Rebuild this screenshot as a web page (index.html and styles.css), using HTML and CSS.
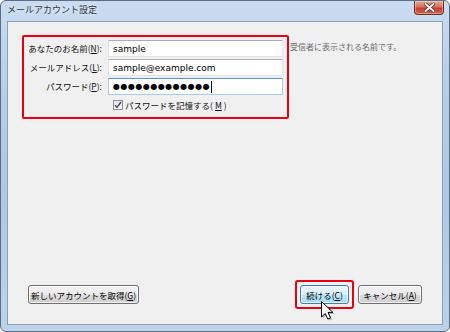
FILE: index.html
```html
<!DOCTYPE html>
<html>
<head>
<meta charset="utf-8">
<link rel="stylesheet" href="styles.css">
</head>
<body>

<!-- dialog window -->
<div class="window">
  <div class="titlebar">
    <span class="title">メールアカウント設定</span>
    <button class="close" aria-label="閉じる">
      <svg width="11" height="9" viewBox="0 0 11 9"><path d="M1.5 1 L9.5 8 M9.5 1 L1.5 8" stroke="#5b1c14" stroke-width="3.4" stroke-linecap="round"/><path d="M1.5 1 L9.5 8 M9.5 1 L1.5 8" stroke="#fff" stroke-width="2" stroke-linecap="round"/></svg>
    </button>
  </div>

  <div class="client">
    <div class="account">
      <div class="mark form">
        <label class="label">あなたのお名前(<u>N</u>):</label>
        <div class="field">sample</div>

        <label class="label">メールアドレス(<u>L</u>):</label>
        <div class="field">sample@example.com</div>

        <label class="label">パスワード(<u>P</u>):</label>
        <div class="field focus"><span class="dots">●●●●●●●●●●●●●</span><span class="caret"></span></div>

        <span></span>
        <label class="remember">
          <span class="check">
            <svg width="8" height="8" viewBox="0 0 8 8"><path d="M1 4.2 L3 6.5 L7 1" fill="none" stroke="#36486b" stroke-width="1.4"/></svg>
          </span>
          パスワードを記憶する(<u>M</u>)
        </label>
      </div>
      <p class="hint">受信者に表示される名前です。</p>
    </div>

    <div class="actions">
      <button class="btn btn-new">新しいアカウントを取得(<u>G</u>)</button>
      <span class="spacer"></span>
      <span class="mark mark-btn">
        <button class="btn btn-go hover">続ける(<u>C</u>)</button>
        <svg class="cursor" width="14" height="21" viewBox="0 0 14 21">
          <path d="M2 2 L2 17.5 L5.8 14 L8.3 19.6 L11 18.4 L8.5 12.9 L13.4 12.9 Z" fill="rgba(0,0,0,0.25)"/>
          <path d="M0.5 0.5 L0.5 16 L4.3 12.5 L6.8 18.1 L9.5 16.9 L7 11.4 L11.9 11.4 Z" fill="#fff" stroke="#000" stroke-width="1" stroke-linejoin="round"/>
        </svg>
      </span>
      <button class="btn btn-cancel">キャンセル(<u>A</u>)</button>
    </div>
  </div>
</div>

</body>
</html>
```

FILE: styles.css
```css
* {box-sizing: border-box}
body {
  margin: 0;
  background: #fff;
  font-family: "Noto Sans CJK JP", "DejaVu Sans", sans-serif;
  font-size: 8.5px;
  color: #111;
}

/* window frame */
.window {
  width: 450px;
  height: 332px;
  display: flex;
  flex-direction: column;
  padding: 0 6px 6px 6px;
  border: 1px solid #5d6d82;
  border-radius: 6px;
  background: linear-gradient(to bottom, #c9dcf1 0%, #b5cde8 30%, #aec8e5 60%, #bdd3ec 100%);
}

.titlebar {
  height: 20px;
  display: flex;
  align-items: flex-start;
  justify-content: space-between;
}

.title {
  margin-top: 3px;
  color: #2f343c;
  font-size: 9px;
  line-height: 12px;
  text-shadow: 0 0 4px rgba(255,255,255,0.9);
}

.close {
  width: 30px;
  height: 14px;
  margin-right: -1px;
  padding: 0;
  display: flex;
  align-items: center;
  justify-content: center;
  border: 1px solid #6c2d24;
  border-top: none;
  border-radius: 0 0 4px 4px;
  background: linear-gradient(to bottom, #e9a899 0%, #d9705e 45%, #c6402d 55%, #d0604c 100%);
  box-shadow: inset 0 0 0 1px rgba(255,255,255,0.35);
}

/* client area */
.client {
  flex: 1;
  display: flex;
  flex-direction: column;
  padding: 13px 20px 15px 14px;
  border: 1px solid #8e9fb5;
  background: #f0f0f0;
}

.account {
  display: flex;
  align-items: flex-start;
}

/* red annotation box */
.mark {
  border: 2px solid #e60012;
  border-radius: 2px;
}

.form {
  display: grid;
  grid-template-columns: 78px 175px;
  grid-auto-rows: 17px;
  column-gap: 6px;
  row-gap: 2px;
  padding: 3px 4px 3px 0;
}

.label {
  text-align: right;
  line-height: 17px;
  white-space: nowrap;
}

.field {
  display: flex;
  align-items: center;
  padding: 0 4px;
  border: 1px solid #e2e3ea;
  border-top-color: #abadb3;
  background: #fff;
  font-family: "DejaVu Sans", sans-serif;
  font-size: 9px;
  color: #000;
}

.field.focus {
  border-color: #a9cbe6;
  border-top-color: #5d93c4;
}

.dots {
  letter-spacing: 0.5px;
  font-size: 8px;
}

.caret {
  width: 1px;
  height: 12px;
  margin-left: 1px;
  background: #000;
}

.remember {
  display: flex;
  align-items: center;
  gap: 2px;
  margin-top: 2px;
  padding-left: 5px;
  height: 12px;
  white-space: nowrap;
}

.check {
  width: 10px;
  height: 10px;
  display: flex;
  align-items: center;
  justify-content: center;
  border: 1px solid #8f8f8f;
  background: linear-gradient(to bottom, #e4e4e4, #fafafa);
}

.hint {
  margin: 6px 0 0 1px;
  line-height: 12px;
  font-size: 8px;
  color: #6a6a6a;
  white-space: nowrap;
}

/* bottom buttons */
.actions {
  margin-top: auto;
  display: flex;
  align-items: center;
  padding-left: 6px;
  gap: 4px;
}

.spacer {
  flex: 1;
}

.mark-btn {
  position: relative;
  padding: 3px;
  border-radius: 3px;
}

.btn {
  height: 19px;
  padding: 0;
  border: 1px solid #707070;
  border-radius: 3px;
  background: linear-gradient(to bottom, #f2f2f2 0%, #ebebeb 50%, #dddddd 51%, #cfcfcf 100%);
  box-shadow: inset 0 0 0 1px rgba(255,255,255,0.7);
  font-family: "Noto Sans CJK JP", "DejaVu Sans", sans-serif;
  font-size: 8.5px;
  color: #000;
  white-space: nowrap;
}

.btn.hover {
  border-color: #3c7fb1;
  background: linear-gradient(to bottom, #eaf6fd 0%, #d9f0fc 50%, #bee6fd 51%, #a7d9f5 100%);
}

.btn-new {width: 111px;}
.btn-go {width: 49px; display: block;}
.btn-cancel {width: 64px;}

/* mouse pointer over the button */
.cursor {
  position: absolute;
  left: 24px;
  top: 19px;
}
```
